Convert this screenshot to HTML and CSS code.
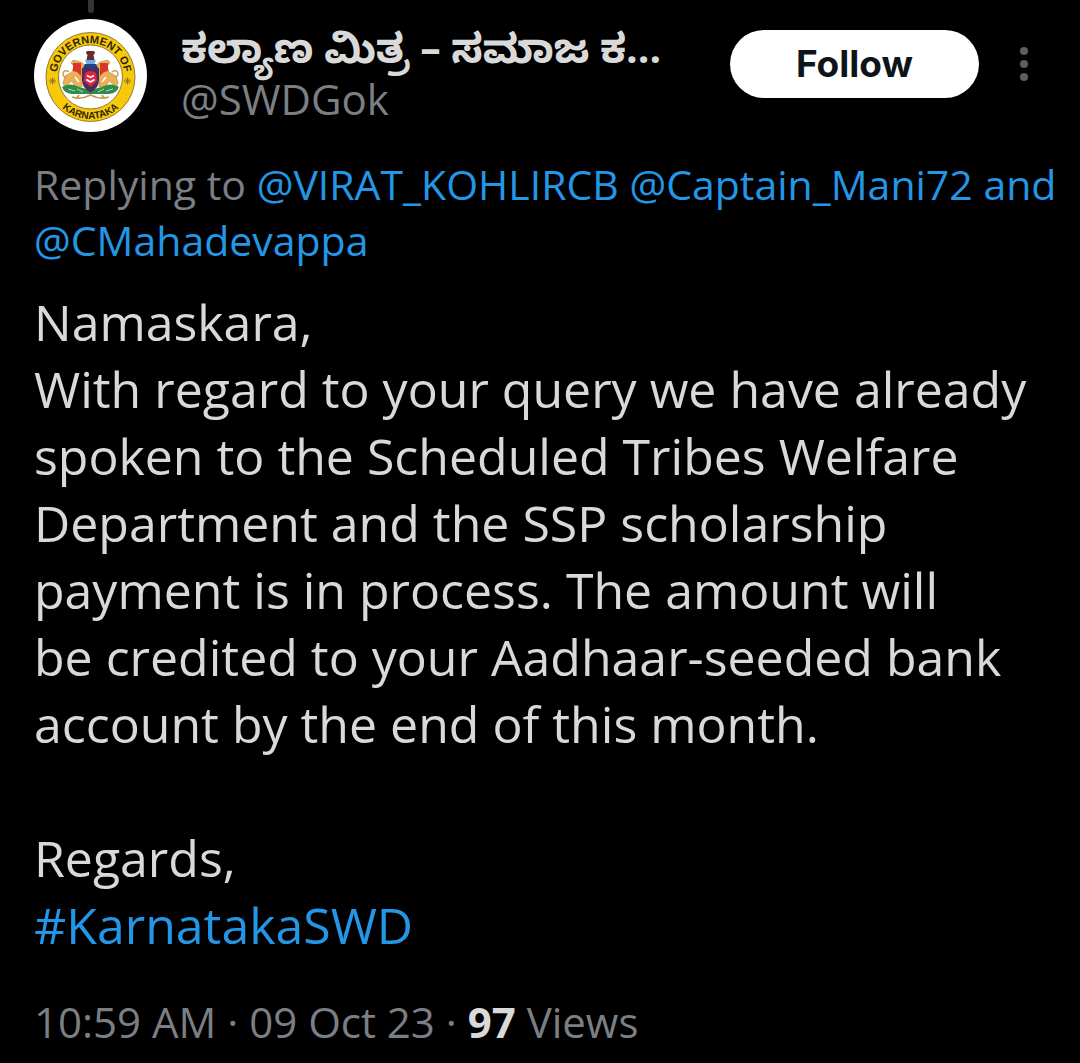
FILE: index.html
```html
<!DOCTYPE html>
<html lang="en">
<head>
    <meta charset="UTF-8">
    <meta name="viewport" content="width=device-width, initial-scale=1.0">
    <link rel="stylesheet" href="styles.css">
    <title>SWDGok reply</title>
</head>
<body>

<article class="tweet">
    <header class="tweet-header">
        <div class="avatar-column">
            <div class="thread-line"></div>
            <svg class="avatar" viewBox="0 0 113 113" role="img" aria-label="Government of Karnataka">
                <defs>
                    <path id="topArc" d="M22.700 62 A34 34 0 1 1 90.300 62"/>
                    <path id="bottomArc" d="M14.500 58 A42 42 0 0 0 98.500 58"/>
                </defs>
                <circle cx="56.5" cy="56.5" r="56.5" fill="#fff"/>
                <circle cx="56.5" cy="58" r="44.5" fill="#f8c90a" stroke="#8f7d2c" stroke-width="1"/>
                <circle cx="56.5" cy="58" r="32" fill="#fff" stroke="#8f7d2c" stroke-width="1"/>
                <text class="seal-text"><textPath href="#topArc" startOffset="50%" text-anchor="middle">GOVERNMENT OF</textPath></text>
                <text class="seal-text seal-text-bottom"><textPath href="#bottomArc" startOffset="50%" text-anchor="middle">KARNATAKA</textPath></text>
                <!-- side stars -->
                <path d="M15 62h7M18.500 58.500v7M16 59.500l5 5M21 59.500l-5 5M90 62h7M93.500 58.500v7M91 59.500l5 5M96 59.500l-5 5" stroke="#8b7420" stroke-width="1"/>
                <!-- lions -->
                <g fill="#e9b056" stroke="#b5732f" stroke-width=".5">
                    <path d="M47 43l-8-2-2 3 3 3-2 6-7 4-2 7 2 5 5-1-2-3 4-3 3 6h7V50l4-3z"/>
                    <path d="M66 43l8-2 2 3-3 3 2 6 7 4 2 7-2 5-5-1 2-3-4-3-3 6h-7V50l-4-3z"/>
                    <path d="M32 59c-6-3-2-10 3-6M81 59c6-3 2-10-3-6" fill="none" stroke="#d59b54" stroke-width="1.500"/>
                </g>
                <path d="M39 44h8v13l-4-4-4-1zM66 44h8v8l-4 1-4 4z" fill="#d8352b"/>
                <path d="M41 58l4 5M72 58l-4 5" stroke="#fff" stroke-width="1.500"/>
                <!-- wreath -->
                <path d="M28 68q8-5 17 0l11.500 3 11.500-3q9-5 17 0-2 6-10 7H38q-8-1-10-7z" fill="#2f8b4b"/>
                <path d="M34 70l7 2M43 70l6 3M79 70l-7 2M70 70l-6 3" stroke="#b6d9ae" stroke-width="1"/>
                <path d="M38 78q9 3 18.500-2 9.500 5 18.500 2M45 76l-3 4M68 76l3 4" fill="none" stroke="#c69759" stroke-width="1.800"/>
                <!-- shield -->
                <path d="M48 49h17v12q0 8-8.500 12.500Q48 69 48 61z" fill="#4c2c5a"/>
                <path d="M51 54q5-4 11 0l1 8-6.500 6-6.500-6z" fill="#db2740"/>
                <path d="M53 56.500l3.500 2 3.500-2M52.500 60.500l4 2.500 4-2.500" fill="none" stroke="#fff" stroke-width="1.500"/>
                <!-- capital -->
                <path d="M52.500 41l1-5q-3-3 0-4h6q3 1 0 4l1 5z" fill="#682c2c"/>
                <path d="M51 41h11l-2 5h-7z" fill="#6eabe5"/>
                <path d="M51 45h11l2 4H49z" fill="#263d80"/>
            </svg>
        </div>
        <div class="names">
            <div class="display-name" lang="kn">ಕಲ್ಯಾಣ ಮಿತ್ರ – ಸಮಾಜ ಕ...</div>
            <div class="handle">@SWDGok</div>
        </div>
        <div class="actions">
            <button class="follow-button" type="button">Follow</button>
            <button class="more-button" type="button" aria-label="More">
                <svg width="10" height="36" viewBox="0 0 10 36" fill="#5d5d5d">
                    <circle cx="5" cy="5" r="4"/>
                    <circle cx="5" cy="18" r="4"/>
                    <circle cx="5" cy="31" r="4"/>
                </svg>
            </button>
        </div>
    </header>

    <p class="replying">Replying to <a href="#">@VIRAT_KOHLIRCB</a> <a href="#">@Captain_Mani72</a> <a href="#">and</a> <a href="#">@CMahadevappa</a></p>

    <p class="tweet-text">Namaskara,<br>
        With regard to your query we have already<br>
        spoken to the Scheduled Tribes Welfare<br>
        Department and the SSP scholarship<br>
        payment is in process. The amount will<br>
        be credited to your Aadhaar-seeded bank<br>
        account by the end of this month.<br>
        <br>
        Regards,<br>
        <a href="#">#KarnatakaSWD</a></p>

    <p class="meta">10:59 AM · 09 Oct 23 · <strong>97</strong> Views</p>
</article>

</body>
</html>
```
FILE: styles.css
```css
body {
    margin: 0;
    background-color: #000;
    color: #d9d9d9;
    font-family: "Open Sans", "Noto Sans", sans-serif;
}

a {
    color: #2496e6;
    text-decoration: none;
}

.tweet {
    padding: 0 12px 0 34px;
}

.tweet-header {
    display: flex;
    align-items: flex-start;
}

.avatar-column {
    flex: none;
    display: flex;
    flex-direction: column;
    align-items: center;
    gap: 6px;
    margin-right: 34px;
}

.thread-line {
    width: 6px;
    height: 13px;
    border-radius: 0 0 3px 3px;
    background-color: #333639;
}

.avatar {
    display: block;
    width: 113px;
    height: 113px;
}

.seal-text {
    font-family: "Liberation Sans", sans-serif;
    font-size: 11px;
    font-weight: bold;
    fill: #2d2608;
}

.seal-text-bottom {
    font-size: 10px;
}

.names {
    flex: 1;
    min-width: 0;
    padding-top: 19px;
}

.display-name {
    white-space: nowrap;
    font-family: "Open Sans", "Noto Sans Kannada", sans-serif;
    font-size: 41px;
    font-weight: bold;
    line-height: 56px;
}

.handle {
    color: #7b7f84;
    font-size: 42px;
    line-height: 48px;
}

.actions {
    flex: none;
    display: flex;
    align-items: center;
    padding-top: 30px;
}

.follow-button {
    padding: 0 66px;
    border: none;
    border-radius: 34px;
    background-color: #fff;
    color: #0f1419;
    font-family: Inter, sans-serif;
    font-size: 37px;
    font-weight: bold;
    line-height: 68px;
    cursor: pointer;
}

.more-button {
    display: flex;
    padding: 0 39px 0 40px;
    border: none;
    background: none;
    cursor: pointer;
}

.replying,
.meta {
    margin: 24px 0 0;
    color: #7b7f84;
    font-size: 41px;
    line-height: 56px;
}

.tweet-text {
    margin: 21px 0 0;
    font-size: 50px;
    line-height: 67px;
}

.meta {
    margin-top: 35px;
    font-size: 42px;
}

.meta strong {
    color: #d9d9d9;
}
```
